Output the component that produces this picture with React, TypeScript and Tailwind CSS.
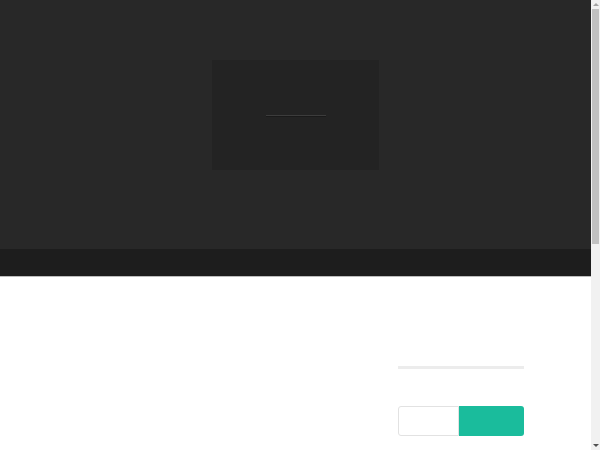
function Scrollbar() {
  return (
    <div className="flex w-[9px] shrink-0 flex-col bg-[#f1f1f1]">
      <div className="flex h-[9px] items-center justify-center">
        <div className="h-0 w-0 border-x-[3px] border-b-[3px] border-x-transparent border-b-[#a3a3a3]" />
      </div>
      <div className="mx-[1px] h-[235px] bg-[#c1c1c1]" />
      <div className="flex-1" />
      <div className="flex h-[9px] items-center justify-center">
        <div className="h-0 w-0 border-x-[3px] border-t-[3px] border-x-transparent border-t-[#505050]" />
      </div>
    </div>
  );
}

export default function App() {
  return (
    <div className="flex h-[450px] overflow-hidden bg-white font-['Liberation_Sans',sans-serif]">
      <div className="min-w-0 flex-1 overflow-hidden">
        {/* hero */}
        <section className="flex h-[249px] justify-center bg-[#282828] pt-[60px]">
          <div className="flex h-[110px] w-[167px] items-center justify-center bg-[#232323]">
            <div className="h-px w-[60px] bg-[#3c3c3c] shadow-[0_1px_0_#1a1a1a]" />
          </div>
        </section>
        {/* nav bar */}
        <nav className="h-[28px] border-b border-[#bdbdbd] bg-[#1d1d1d]" />
        {/* content */}
        <main className="flex justify-end pr-[67px] pt-[89px]">
          <aside className="flex w-[126px] flex-col">
            <div className="h-[3px] bg-[#ececec]" />
            <form className="mt-[37px] flex h-[30px]">
              <input
                className="w-[61px] rounded-l-[3px] border border-[#e2e2e2] bg-white outline-none"
                aria-label="search"
              />
              <button className="flex-1 rounded-r-[3px] bg-[#1abc9c]" aria-label="go" />
            </form>
          </aside>
        </main>
      </div>
      <Scrollbar />
    </div>
  );
}
